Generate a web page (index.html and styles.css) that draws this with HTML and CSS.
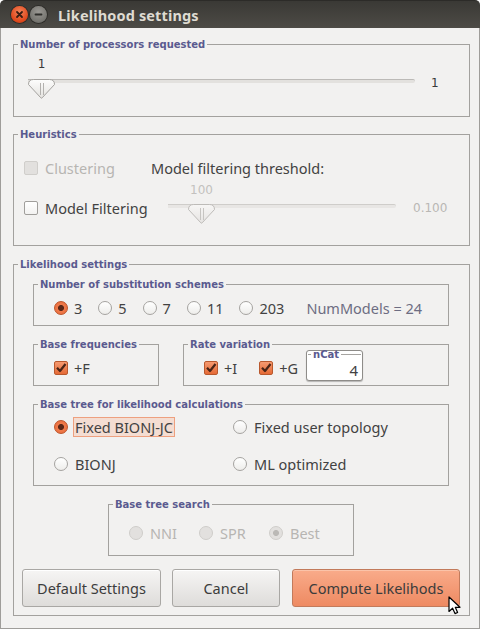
FILE: index.html
```html
<!DOCTYPE html>
<html>
<head>
<meta charset="utf-8">
<link rel="stylesheet" href="styles.css">
</head>
<body>
<div class="window">
  <div class="titlebar">
    <span class="wbtn close">
      <svg width="17" height="17" viewBox="0 0 17 17"><path d="M6 6 L11 11 M11 6 L6 11" stroke="#3b1d12" stroke-width="1.8" stroke-linecap="round"/></svg>
    </span>
    <span class="wbtn min">
      <svg width="17" height="17" viewBox="0 0 17 17"><path d="M5.5 8.5 H11.5" stroke="#2f2e2b" stroke-width="1.8" stroke-linecap="round"/></svg>
    </span>
    <span class="wtitle">Likelihood settings</span>
  </div>

  <div class="content">
    <fieldset class="group g1">
      <legend>Number of processors requested</legend>
      <div class="proc">
        <div class="proc-slider">
          <div class="tick-label">1</div>
          <div class="slider">
            <div class="track"></div>
            <svg class="thumb" width="27" height="20" viewBox="0 0 27 20">
              <defs><linearGradient id="tg1" x1="0" y1="0" x2="0" y2="1"><stop offset="0" stop-color="#fdfdfc"/><stop offset="1" stop-color="#e4e2df"/></linearGradient></defs>
              <path d="M0.5 5.5 Q0.5 0.5 5.5 0.5 H21.5 Q26.5 0.5 26.5 5.5 L14.2 18.8 Q13.5 19.6 12.8 18.8 Z" fill="url(#tg1)" stroke="#a4a29f"/>
              <path d="M12.5 4 V16 M15.5 4 V16" stroke="#b3b1ae"/>
            </svg>
          </div>
        </div>
        <div class="proc-value">1</div>
      </div>
    </fieldset>

    <fieldset class="group g2">
      <legend>Heuristics</legend>
      <div class="heur-row1">
        <label class="opt disabled clus"><span class="check"></span>Clustering</label>
        <span class="thr">Model filtering threshold:</span>
      </div>
      <div class="heur-row2">
        <label class="opt mf"><span class="check"></span>Model Filtering</label>
        <div class="mf-slider">
          <div class="tick-label dim">100</div>
          <div class="slider">
            <div class="track light"></div>
            <svg class="thumb off20" width="27" height="20" viewBox="0 0 27 20">
              <defs><linearGradient id="tg2" x1="0" y1="0" x2="0" y2="1"><stop offset="0" stop-color="#f7f6f5"/><stop offset="1" stop-color="#e6e4e2"/></linearGradient></defs>
              <path d="M0.5 5.5 Q0.5 0.5 5.5 0.5 H21.5 Q26.5 0.5 26.5 5.5 L14.2 18.8 Q13.5 19.6 12.8 18.8 Z" fill="url(#tg2)" stroke="#bdbbb8"/>
              <path d="M12.5 4 V16 M15.5 4 V16" stroke="#c6c4c1"/>
            </svg>
          </div>
        </div>
        <div class="mf-value">0.100</div>
      </div>
    </fieldset>

    <fieldset class="group g3">
      <legend>Likelihood settings</legend>

      <fieldset class="sub subs">
        <legend>Number of substitution schemes</legend>
        <div class="radio-row">
          <label class="opt"><span class="radio on"></span>3</label>
          <label class="opt"><span class="radio"></span>5</label>
          <label class="opt"><span class="radio"></span>7</label>
          <label class="opt"><span class="radio"></span>11</label>
          <label class="opt"><span class="radio"></span>203</label>
          <span class="nummodels">NumModels = 24</span>
        </div>
      </fieldset>

      <div class="pair">
        <fieldset class="sub basefreq">
          <legend>Base frequencies</legend>
          <div class="check-row">
            <label class="opt"><span class="check on"><svg width="14" height="14" viewBox="0 0 14 14"><path d="M3 6.8 L6 10 L11.5 3" fill="none" stroke="#4a2517" stroke-width="2.2" stroke-linejoin="round"/></svg></span>+F</label>
          </div>
        </fieldset>
        <fieldset class="sub ratevar">
          <legend>Rate variation</legend>
          <div class="check-row">
            <label class="opt plusi"><span class="check on"><svg width="14" height="14" viewBox="0 0 14 14"><path d="M3 6.8 L6 10 L11.5 3" fill="none" stroke="#4a2517" stroke-width="2.2" stroke-linejoin="round"/></svg></span>+I</label>
            <label class="opt plusg"><span class="check on"><svg width="14" height="14" viewBox="0 0 14 14"><path d="M3 6.8 L6 10 L11.5 3" fill="none" stroke="#4a2517" stroke-width="2.2" stroke-linejoin="round"/></svg></span>+G</label>
            <div class="ncat">
              <fieldset class="ncat-set">
                <legend>nCat</legend>
                <div class="ncat-val">4</div>
              </fieldset>
            </div>
          </div>
        </fieldset>
      </div>

      <fieldset class="sub basetree">
        <legend>Base tree for likelihood calculations</legend>
        <div class="tree-grid">
          <label class="opt"><span class="radio on"></span><span class="lbl focus">Fixed BIONJ-JC</span></label>
          <label class="opt"><span class="radio"></span><span class="lbl">Fixed user topology</span></label>
          <label class="opt"><span class="radio"></span><span class="lbl">BIONJ</span></label>
          <label class="opt"><span class="radio"></span><span class="lbl">ML optimized</span></label>
        </div>
      </fieldset>

      <fieldset class="sub search">
        <legend>Base tree search</legend>
        <div class="search-row">
          <label class="opt disabled"><span class="radio"></span>NNI</label>
          <label class="opt disabled"><span class="radio"></span>SPR</label>
          <label class="opt disabled"><span class="radio on"></span>Best</label>
        </div>
      </fieldset>

      <div class="buttons">
        <button class="btn b-default">Default Settings</button>
        <button class="btn b-cancel">Cancel</button>
        <button class="btn b-compute">Compute Likelihods</button>
        <svg class="cursor" width="13" height="19" viewBox="0 0 13 19">
          <path d="M1 1 L1 15.5 L4.6 12.2 L7 17.6 L9.6 16.5 L7.3 11.3 L12 11.3 Z" fill="#ffffff" stroke="#000000" stroke-width="1.2" stroke-linejoin="round"/>
        </svg>
      </div>
    </fieldset>
  </div>
</div>
</body>
</html>
```

FILE: styles.css
```css
* { box-sizing: border-box; }

html, body {
  margin: 0;
  padding: 0;
  background: #ffffff;
}

body {
  font-family: "Noto Sans", "DejaVu Sans", sans-serif;
  font-size: 14.5px;
  color: #424242;
}

.window {
  width: 480px;
  height: 629px;
  display: flex;
  flex-direction: column;
}

/* ---------- title bar ---------- */
.titlebar {
  height: 28px;
  flex: none;
  display: flex;
  align-items: center;
  padding-left: 11px;
  border-radius: 5px 5px 0 0;
  background: linear-gradient(#3a3935, #4d4b46);
  border-top: 1px solid #2c2b28;
}

.wbtn {
  width: 17px;
  height: 17px;
  border-radius: 50%;
  display: flex;
  align-items: center;
  justify-content: center;
}

.wbtn.close {
  background: radial-gradient(circle at 50% 35%, #f4845a, #e0491d 65%, #b8360f);
  box-shadow: 0 0 0 1px #2e2d29;
}

.wbtn.min {
  margin-left: 2px;
  background: radial-gradient(circle at 50% 35%, #9a9893, #787772 65%, #5d5c58);
  box-shadow: 0 0 0 1px #2e2d29;
}

.wtitle {
  margin-left: 11px;
  font-weight: bold;
  font-size: 14.5px;
  color: #dfdbd2;
  letter-spacing: 0.15px;
}

/* ---------- content ---------- */
.content {
  flex: 1;
  background: #f2f1f0;
  border: 1px solid #9f9d9a;
  border-top: 0;
  padding: 10px 9px 0 12px;
}

fieldset {
  margin: 0;
  padding: 0;
  min-inline-size: 0;
  border: 1px solid #a3a19e;
}

legend {
  margin-left: 4px;
  padding: 0 2px;
  font-family: "DejaVu Sans", sans-serif;
  font-weight: bold;
  font-size: 10px;
  line-height: 13px;
  color: #5a5a8f;
}

.g1 { height: 79px; }
.g2 { margin-top: 11px; height: 118px; }
.g3 { margin-top: 12px; height: 358px; }

/* ---------- slider ---------- */
.tick-label {
  width: 27px;
  text-align: center;
  font-family: "DejaVu Sans", sans-serif;
  font-size: 12px;
  line-height: 14px;
  color: #3a3a3a;
}

.tick-label.dim { color: #c3c1be; }

.slider {
  position: relative;
  height: 20px;
}

.track {
  margin-top: 7px;
  height: 4px;
  border-top: 1px solid #bcbab7;
  background: #e3e1de;
  border-radius: 0 2px 2px 0;
}

.track.light {
  border-top-color: #cfcdca;
  background: #e8e6e4;
}

.thumb {
  position: absolute;
  left: 0;
  top: 0;
}

.thumb.off20 { left: 20px; }

/* group 1 */
.proc {
  display: flex;
  height: 65px;
  padding-left: 14px;
}

.proc-slider {
  width: 387px;
  padding-top: 6px;
}

.proc-slider .slider { margin-top: 8px; }

.proc-value {
  margin-left: 16px;
  padding-top: 25px;
  font-family: "DejaVu Sans", sans-serif;
  font-size: 12px;
  line-height: 14px;
  color: #3a3a3a;
}

/* ---------- options ---------- */
.opt {
  display: flex;
  align-items: center;
  gap: 6px;
  line-height: 18px;
  white-space: nowrap;
}

.opt.disabled { color: #b7b5b2; }

.check {
  width: 14px;
  height: 14px;
  flex: none;
  border: 1px solid #a09e9b;
  border-radius: 2px;
  background: linear-gradient(#ffffff, #f3f2f1);
  display: flex;
  align-items: center;
  justify-content: center;
}

.check svg { margin: -1px; }

.check.on {
  border-color: #b9582d;
  background: linear-gradient(#f69a70, #e56a36);
}

.opt.disabled .check {
  border-color: #d0cecb;
  background: #e2e0de;
}

.radio {
  width: 14px;
  height: 14px;
  flex: none;
  border-radius: 50%;
  border: 1px solid #a5a3a0;
  background: linear-gradient(#ffffff, #eeedeb);
  position: relative;
}

.radio.on {
  border-color: #bd5429;
  background: radial-gradient(circle, #5b2717 0 2.6px, #f07a4a 3.4px, #e8683a 100%);
}

.opt.disabled .radio {
  border-color: #cfcdca;
  background: #e2e0de;
}

.opt.disabled .radio.on {
  background: radial-gradient(circle, #bbb9b6 0 2.6px, #e2e0de 3.4px);
}

/* group 2 */
.heur-row1 {
  display: flex;
  padding: 18px 0 0 10px;
  height: 36px;
}

.opt.clus { width: 127px; }
.opt.clus, .opt.mf { gap: 7px; }

.thr { line-height: 18px; }

.heur-row2 {
  display: flex;
  align-items: flex-start;
  padding-left: 10px;
}

.opt.mf {
  width: 144px;
  margin-top: 22px;
}

.mf-slider {
  width: 228px;
  padding-top: 6px;
}

.mf-slider .tick-label { margin-left: 20px; }
.mf-slider .slider { margin-top: 7px; }

.mf-value {
  margin-left: 17px;
  margin-top: 24px;
  font-family: "DejaVu Sans", sans-serif;
  font-size: 12px;
  line-height: 14px;
  color: #b9b7b4;
}

/* group 3 */
.g3 > .sub, .g3 > .pair {
  margin-left: 19px;
  margin-right: 20px;
}

.subs { margin-top: 7px; }

.radio-row {
  display: flex;
  align-items: center;
  height: 34px;
  padding-left: 20px;
  gap: 16px;
}

.nummodels {
  margin-left: 6px;
  color: #6d6d82;
  line-height: 18px;
}

.pair {
  display: flex;
  gap: 24px;
  margin-top: 12px;
}

.basefreq { width: 126px; }
.ratevar { flex: 1; }

.check-row {
  display: flex;
  align-items: center;
  height: 34px;
  padding-left: 20px;
}

.opt.plusg { margin-left: 22px; }

.ncat {
  align-self: flex-start;
  margin-top: -1px;
  margin-left: 8px;
  width: 57px;
  height: 31px;
  background: #ffffff;
  border: 1px solid #8e8c89;
  border-radius: 3px;
  box-shadow: 0 1px 1px rgba(0,0,0,0.25);
}

.ncat-set {
  border: 0;
  border-top: 1px solid #a6a4a1;
  margin: 0 1px;
}

.ncat-set legend {
  line-height: 7px;
  margin-left: 3px;
  padding: 0 2px;
}

.ncat-val {
  text-align: right;
  padding-right: 3px;
  font-size: 15px;
  line-height: 20px;
  margin-top: 2px;
}

.basetree { margin-top: 12px; }

.tree-grid {
  display: grid;
  grid-template-columns: 179px auto;
  row-gap: 17px;
  height: 74px;
  padding: 6px 0 0 20px;
  align-content: start;
}

.tree-grid .opt { gap: 5px; }

.lbl {
  border: 1px solid transparent;
  padding: 0 1px;
  line-height: 18px;
}

.lbl.focus {
  background: #f4ddd2;
  border-color: #eea07f;
}

.g3 > .sub.search {
  margin-top: 12px;
  margin-left: 94px;
  width: 246px;
}

.search-row {
  display: flex;
  align-items: center;
  height: 44px;
  padding-left: 20px;
}

.search-row .opt {
  width: 70px;
  gap: 7px;
}

/* buttons */
.buttons {
  position: relative;
  display: flex;
  gap: 11px;
  margin-top: 13px;
  padding-left: 8px;
}

.btn {
  height: 38px;
  font-family: "Noto Sans", "DejaVu Sans", sans-serif;
  font-size: 14.5px;
  color: #3c3c3c;
  border: 1px solid #a9a7a4;
  border-radius: 3px;
  background: linear-gradient(#f6f5f4, #dedcda);
  box-shadow: inset 0 1px 0 #ffffff;
  padding: 0;
}

.b-default { width: 139px; }
.b-cancel { width: 108px; }
.b-compute {
  width: 168px;
  margin-left: 1px;
  border-color: #c27a5b;
  background: linear-gradient(#f9ab8a, #ee8a62);
  box-shadow: inset 0 1px 0 #fbc3a9;
}

.cursor {
  position: absolute;
  left: 434px;
  top: 27px;
}
```
